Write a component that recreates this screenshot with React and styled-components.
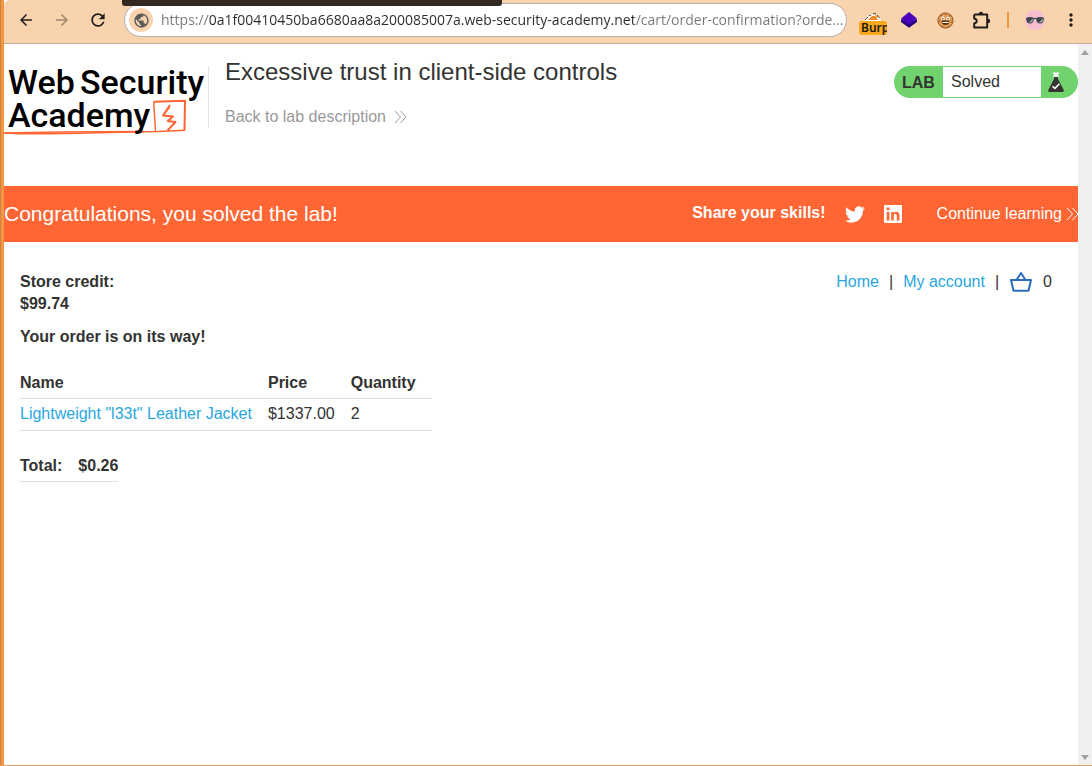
import React from 'react';
import styled, { createGlobalStyle } from 'styled-components';
import { MdArrowBack, MdArrowForward, MdRefresh, MdPublic, MdMoreVert } from 'react-icons/md';

const GlobalStyle = createGlobalStyle`
  *, *::before, *::after { box-sizing: border-box; }
  body {
    margin: 0;
    background: #fff;
    color: #333332;
    font: 16px/22px "Liberation Sans", Arial, sans-serif;
  }
  a { color: #29a7df; text-decoration: none; }
  h1, h2, h3, p { margin: 0; font-weight: inherit; font-size: inherit; }
  button { font: inherit; color: inherit; }
  svg { display: block; flex: none; }
`;

const Browser = styled.div`
  position: relative;
  display: flex;
  flex-direction: column;
  min-height: 100vh;
  border-left: 4px solid #f49641;
  border-bottom: 1px solid #e5a160;
  &::before {
    content: "";
    position: absolute;
    top: 0;
    bottom: 0;
    left: -4px;
    width: 1px;
    background: #ce8343;
  }
`;

const Toolbar = styled.header`
  display: flex;
  align-items: center;
  height: 44px;
  padding: 0 3px 3px 4px;
  background: #f9d2ae;
  border-bottom: 1px solid #c4aa94;
  border-top-left-radius: 6px;
`;

const DarkStrip = styled.div`
  position: absolute;
  top: 0;
  left: 118px;
  width: 380px;
  height: 6px;
  border-radius: 0 0 3px 3px;
  background: #322822;
`;

const ToolButton = styled.button`
  display: flex;
  align-items: center;
  justify-content: center;
  flex: none;
  width: 36px;
  height: 34px;
  padding: 0;
  border: 0;
  background: none;
  color: #211d1a;
  opacity: ${(p) => (p.$dim ? 0.42 : 1)};
`;

const AddressBar = styled.form`
  display: flex;
  align-items: center;
  flex: 1;
  min-width: 0;
  height: 34px;
  margin: 0 8px;
  padding: 0 2px 0 4px;
  border: 1px solid #b3b0ad;
  border-radius: 17px;
  background: #fff;
`;

const SiteInfo = styled.button`
  display: flex;
  align-items: center;
  justify-content: center;
  flex: none;
  width: 24px;
  height: 24px;
  padding: 0;
  border: 0;
  border-radius: 50%;
  background: #f9d2ae;
  color: #5d5b5a;
`;

const AddressInput = styled.input`
  flex: 1;
  min-width: 0;
  height: 24px;
  margin-left: 8px;
  padding: 0;
  border: 0;
  outline: 0;
  font: 14px/24px "Open Sans", "Noto Sans", sans-serif;
  color: transparent;
  background: linear-gradient(90deg, #777 47px, #2b2b2b 47px, #2b2b2b 473px, #777 473px);
  -webkit-background-clip: text;
  background-clip: text;
`;

const Divider = styled.span`
  flex: none;
  width: 2px;
  height: 16px;
  margin: 0 8px;
  background: #f49641;
`;

const BurpIcon = styled.span`
  display: flex;
  flex-direction: column;
  align-items: center;
  width: 28px;
  padding-top: 6px;
`;

const BurpLabel = styled.span`
  width: 28px;
  height: 14px;
  padding-left: 2px;
  overflow: hidden;
  border-radius: 3px;
  background: #faa81e;
  color: #1d1a12;
  font: 600 12px/14px "Noto Sans", sans-serif;
  text-align: left;
`;

const Viewport = styled.div`
  display: flex;
  flex: 1;
`;

const Page = styled.div`
  flex: 1;
  min-width: 0;
`;

const ScrollTrack = styled.div`
  display: flex;
  flex-direction: column;
  justify-content: space-between;
  align-items: center;
  flex: none;
  width: 14px;
  padding: 6px 0 5px;
  background: #f0f0f0;
`;

const LabHeader = styled.header`
  display: flex;
  align-items: flex-start;
  height: 142px;
  padding-top: 14px;
`;

const LogoLink = styled.a`
  flex: none;
  width: 205px;
  margin-top: 8px;
  background: linear-gradient(#e4e4e4, #e4e4e4) right top / 1px 62px no-repeat;
`;

const TitleBlock = styled.div`
  flex: 1;
  padding-left: 16px;
`;

const Title = styled.h2`
  font-size: 24px;
  line-height: 28px;
`;

const ArrowLink = styled.a`
  display: inline-flex;
  align-items: center;
  gap: ${(p) => p.$gap}px;
  margin-right: ${(p) => (p.$bleed ? -1 : 0)}px;
  color: ${(p) => p.$color};
`;

const BackRow = styled.p`
  margin-top: 20px;
`;

const LabStatus = styled.div`
  display: flex;
  flex: none;
  width: 184px;
  height: 32px;
  margin-top: 8px;
  padding: 1px 0;
  border-radius: 16px;
  background: #70d36d;
  line-height: 30px;
`;

const StatusLabel = styled.span`
  width: 49px;
  padding: 1px 0 0 8px;
  font-weight: bold;
`;

const StatusText = styled.p`
  flex: 1;
  padding-left: 8px;
  background: #fff;
`;

const StatusIcon = styled.span`
  width: 37px;
  padding: 5px 0 0 7px;
`;

const Banner = styled.section`
  display: flex;
  align-items: center;
  height: 56px;
  overflow: hidden;
  background: #ff6633;
  color: #fff;
`;

const BannerTitle = styled.h3`
  flex: 1;
  font-size: 21px;
`;

const Share = styled.div`
  display: flex;
  align-items: center;
  gap: 19px;
  margin-right: 35px;
`;

const ShareLabel = styled.span`
  padding-bottom: 2px;
  font-weight: bold;
`;

const Store = styled.main`
  padding: 29px 26px 0 16px;
`;

const StoreTop = styled.div`
  display: flex;
  justify-content: space-between;
  align-items: flex-start;
`;

const Strong = styled.p`
  font-weight: bold;
  margin-bottom: ${(p) => p.$below || 0}px;
`;

const Nav = styled.nav`
  display: flex;
  align-items: center;
  gap: 10px;
`;

const Table = styled.table`
  border-collapse: collapse;
  margin-bottom: 19px;
`;

const Cell = styled.td`
  height: 32px;
  padding: ${(p) => (p.as === 'th' ? 2 : 0)}px ${(p) => (p.$last ? 0 : 16)}px 0 0;
  border-bottom: 1px solid #dedede;
  font-weight: ${(p) => (p.as === 'th' ? 'bold' : 'normal')};
  text-align: left;
`;

const Chevrons = ({ color }) => (
  <svg width="13" height="14" viewBox="0 0 13 14" fill="none" stroke={color} strokeWidth="1" aria-hidden="true">
    <path d="M1 1l5.500 6L1 13M6.500 1L12 7l-5.500 6" />
  </svg>
);

const LogoText = styled.text`
  font: 500 34px Roboto, sans-serif;
  fill: #000;
`;

const Logo = () => (
  <svg width="204" height="76" viewBox="4 66 204 76" role="img" aria-label="Web Security Academy">
    <g fill="none" stroke="#ff6633" strokeLinejoin="round">
      <path d="M4 133 60 132 144 131.500" strokeWidth="1.500" />
      <path d="M4 133c20 1.400 68 .5 93-.3l61-1.300 27-1.200" strokeWidth="1.500" />
      <path d="M155.500 131 153.700 102" strokeWidth="1.500" />
      <path d="M153.500 101.800 185 100.800 184.500 130.500" strokeWidth="2" />
      <path d="M170 105 163 115.500 172.500 116.500M169.500 107 163 115.500 173 116.500 167.800 121 175.500 122 167.500 130.500" strokeWidth="2" />
    </g>
    <LogoText x="8" y="94">Web</LogoText>
    <LogoText x="80" y="94">Security</LogoText>
    <LogoText x="8" y="127">Academy</LogoText>
  </svg>
);

const Basket = () => (
  <svg width="24" height="20" viewBox="-1 0 24 20" fill="none" stroke="#2a6db8" strokeWidth="2" strokeLinejoin="round">
    <path d="M1 8h20l-2.500 10.800h-15zM6.500 8 11 1l4.500 7" />
  </svg>
);

const Flask = () => (
  <svg width="16" height="20" viewBox="0 0 16 20" aria-hidden="true">
    <path d="M4.500 .7h7M5.800 1v4.500M10.200 1v4.500" stroke="#d3efd2" fill="none" />
    <path d="M6 1h4v5H6z" fill="#fff" />
    <path d="M6 5h4v2l5.700 11q.6 1.700-1.200 2h-13Q-.3 19.700.3 18L6 7z" fill="#333332" />
    <path d="m4.500 14.200 2.400 2.200 4.600-4.600" fill="none" stroke="#fff" strokeWidth="1.500" />
  </svg>
);

const Twitter = () => (
  <svg width="20" height="17" viewBox="0 2 24 20" fill="#fff">
    <path d="M23.950 4.570a10 10 0 0 1-2.820.77 4.960 4.960 0 0 0 2.160-2.720c-.95.55-2 .95-3.130 1.180a4.920 4.920 0 0 0-8.380 4.480C7.690 8.090 4.070 6.130 1.640 3.160a4.820 4.820 0 0 0-.67 2.480c0 1.710.87 3.210 2.190 4.100a4.900 4.900 0 0 1-2.230-.62v.06a4.920 4.920 0 0 0 3.950 4.830 5 5 0 0 1-2.210.08 4.940 4.940 0 0 0 4.600 3.420A9.870 9.870 0 0 1 0 19.540a13.990 13.990 0 0 0 7.560 2.210c9.050 0 14-7.500 14-13.980 0-.21 0-.42-.02-.63a9.940 9.940 0 0 0 2.460-2.550z" />
  </svg>
);

const LinkedIn = () => (
  <svg width="18" height="18" viewBox="0 0 18 18">
    <rect width="18" height="18" rx="1" fill="#fff" />
    <path d="M2.700 7h2.700v8.500H2.700zM2.600 2.600h2.900v2.700H2.600zM7.200 7h2.500v1.200c1.300-2.200 5.800-2 5.800 2.200v5.100h-2.700v-4.700c0-2.500-3-2.300-3 0v4.700H7.200z" fill="#ff6633" />
  </svg>
);

const BurpMark = () => (
  <svg width="18" height="9" viewBox="0 0 18 9" aria-hidden="true">
    <path d="M1 9 4 5l4-2 5 0 3 3 1 3z" fill="#fff" />
    <path d="M4 8 8 4l3 0 3 4zM10 2l5 3-2 1z" fill="#f18a26" />
    <path d="M9 1.500h3M5 3.500h2M1 8l3-3M13 3l3 3" stroke="#5b6470" fill="none" />
  </svg>
);

const Layers = () => (
  <svg width="16" height="16" viewBox="0 0 16 16" aria-hidden="true">
    <path d="M0 7.500V10l8 5.800L16 10V7.500z" fill="#250081" />
    <path d="m8 0 8 6.500-8 6-8-6z" fill="#4a05ba" />
  </svg>
);

const Cookie = () => (
  <svg width="17" height="17" viewBox="0 0 17 17" aria-hidden="true">
    <circle cx="8.500" cy="8.500" r="7.600" fill="#e09a55" stroke="#8f5322" />
    <path d="M4 3.500h1M8 2.500h1M12 4h1M2 9h1M14 10h1M5 14.500h1M11 14.500h1" stroke="#87491d" />
    <path d="M4 7.500q.5-3 2-3t2 3zM9 7.500q.5-3 2-3t2 3z" fill="#fff" />
    <path d="M5.500 6.500h1M10.500 6.500h1M5 9h7" stroke="#412010" />
    <path d="M4.500 9.500h8q-.8 3.500-4 3.500t-4-3.500z" fill="#55300e" />
    <path d="M5.500 10h6v1h-6z" fill="#fff" />
  </svg>
);

const Puzzle = () => (
  <svg width="20" height="20" viewBox="0 0 20 20" aria-hidden="true">
    <path
      d="M4.200 4.500h12v13h-13v-4q2.500-.5 2.500-2.500t-2.500-2.500v-3q0-1 1-1z"
      fill="none"
      stroke="#211d1a"
      strokeWidth="2"
      strokeLinejoin="round"
    />
    <path d="M7.800 4a2.200 2.200 0 0 1 4.400 0zM17 8.800a2.200 2.200 0 0 1 0 4.400z" fill="#211d1a" />
  </svg>
);

const Avatar = () => (
  <svg width="20" height="20" viewBox="0 0 20 20" aria-hidden="true">
    <circle cx="10" cy="10" r="10" fill="#f6bdcf" />
    <path d="M1 8q4-2 8 0h2q4-2 8 0-.2 5.500-4 5.500-3.300 0-4-4.500H9q-.7 4.500-4 4.500-3.800 0-4-5.500z" fill="#3d474b" />
    <path d="M4 12.500 8 8.500q0 4-3 4zM14 12.500l4-4q0 4-3 4z" fill="#a9b6b9" />
  </svg>
);

const ScrollArrow = ({ down }) => (
  <svg width="8" height="5" viewBox="0 0 8 5" aria-hidden="true">
    <path d={down ? 'M0 0h8L4 5z' : 'M0 5h8L4 0z'} fill="#a0a0a0" />
  </svg>
);

const items = [{ name: 'Lightweight "l33t" Leather Jacket', price: '$1337.00', quantity: 2 }];

export default function App() {
  return (
    <>
      <GlobalStyle />
      <Browser>
        <Toolbar>
          <ToolButton aria-label="Back"><MdArrowBack size={18} /></ToolButton>
          <ToolButton aria-label="Forward" $dim><MdArrowForward size={18} /></ToolButton>
          <ToolButton aria-label="Reload"><MdRefresh size={20} /></ToolButton>
          <AddressBar onSubmit={(e) => e.preventDefault()}>
            <SiteInfo type="button" aria-label="Site information"><MdPublic size={17} /></SiteInfo>
            <AddressInput
              aria-label="Address"
              spellCheck={false}
              defaultValue="https://0a1f00410450ba6680aa8a200085007a.web-security-academy.net/cart/order-confirmation?orde…"
            />
          </AddressBar>
          <ToolButton aria-label="Burp extension">
            <BurpIcon><BurpMark /><BurpLabel>Burp</BurpLabel></BurpIcon>
          </ToolButton>
          <ToolButton aria-label="Layers extension"><Layers /></ToolButton>
          <ToolButton aria-label="Cookie extension"><Cookie /></ToolButton>
          <ToolButton aria-label="Extensions"><Puzzle /></ToolButton>
          <Divider />
          <ToolButton aria-label="Profile"><Avatar /></ToolButton>
          <ToolButton aria-label="Menu"><MdMoreVert size={20} /></ToolButton>
        </Toolbar>
        <DarkStrip />
        <Viewport>
          <Page>
            <LabHeader>
              <LogoLink href="#academy"><Logo /></LogoLink>
              <TitleBlock>
                <Title>Excessive trust in client-side controls</Title>
                <BackRow>
                  <ArrowLink href="#lab" $gap={8} $color="#999">
                    Back to lab description <Chevrons color="#999" />
                  </ArrowLink>
                </BackRow>
              </TitleBlock>
              <LabStatus>
                <StatusLabel>LAB</StatusLabel>
                <StatusText>Solved</StatusText>
                <StatusIcon><Flask /></StatusIcon>
              </LabStatus>
            </LabHeader>
            <Banner>
              <BannerTitle>Congratulations, you solved the lab!</BannerTitle>
              <Share>
                <ShareLabel>Share your skills!</ShareLabel>
                <a href="#twitter" aria-label="Twitter"><Twitter /></a>
                <a href="#linkedin" aria-label="LinkedIn"><LinkedIn /></a>
              </Share>
              <ArrowLink href="#next" $gap={4} $color="#fff" $bleed>
                Continue learning <Chevrons color="#fff" />
              </ArrowLink>
            </Banner>
            <Store>
              <StoreTop>
                <Strong $below={11}>Store credit:<br />$99.74</Strong>
                <Nav>
                  <a href="#home">Home</a>
                  <span>|</span>
                  <a href="#account">My account</a>
                  <span>|</span>
                  <a href="#cart" aria-label="Cart"><Basket /></a>
                  <span>0</span>
                </Nav>
              </StoreTop>
              <Strong $below={18}>Your order is on its way!</Strong>
              <Table>
                <thead>
                  <tr>
                    <Cell as="th">Name</Cell>
                    <Cell as="th">Price</Cell>
                    <Cell as="th">Quantity</Cell>
                  </tr>
                </thead>
                <tbody>
                  {items.map((item) => (
                    <tr key={item.name}>
                      <Cell><a href="#product">{item.name}</a></Cell>
                      <Cell>{item.price}</Cell>
                      <Cell>{item.quantity}</Cell>
                    </tr>
                  ))}
                </tbody>
              </Table>
              <Table>
                <tbody>
                  <tr>
                    <Cell as="th" scope="row">Total:</Cell>
                    <Cell as="th" $last>$0.26</Cell>
                  </tr>
                </tbody>
              </Table>
            </Store>
          </Page>
          <ScrollTrack aria-hidden="true">
            <ScrollArrow />
            <ScrollArrow down />
          </ScrollTrack>
        </Viewport>
      </Browser>
    </>
  );
}
